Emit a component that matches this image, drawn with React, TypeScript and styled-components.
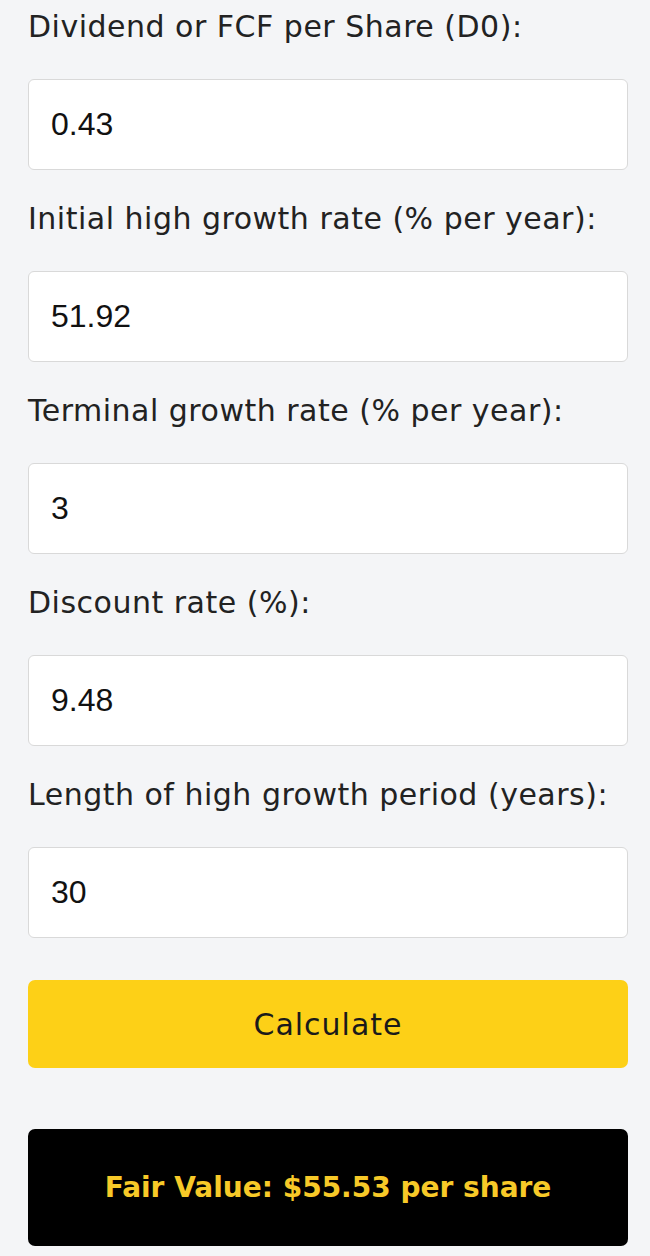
import { useState } from "react";
import styled, { createGlobalStyle } from "styled-components";

const GlobalStyle = createGlobalStyle`
    html, body {
        margin: 0;
        padding: 0;
        background: #f4f5f7;
    }
    * {
        box-sizing: border-box;
    }
`;

type Field = {
    name: string;
    label: string;
    value: string;
};

const initialFields: Field[] = [
    { name: "d0", label: "Dividend or FCF per Share (D0):", value: "0.43" },
    { name: "highGrowth", label: "Initial high growth rate (% per year):", value: "51.92" },
    { name: "terminal", label: "Terminal growth rate (% per year):", value: "3" },
    { name: "discount", label: "Discount rate (%):", value: "9.48" },
    { name: "years", label: "Length of high growth period (years):", value: "30" },
];

function App() {
    const [fields, setFields] = useState<Field[]>(initialFields);

    const onChangeHandler = (event: React.ChangeEvent<HTMLInputElement>) => {
        const { name, value } = event.target;
        setFields((prev) => prev.map((f) => (f.name === name ? { ...f, value } : f)));
    };

    return (
        <>
            <GlobalStyle />
            <Container>
                {fields.map((field) => (
                    <FieldGroup key={field.name}>
                        <Label htmlFor={field.name}>{field.label}</Label>
                        <Input
                            id={field.name}
                            name={field.name}
                            value={field.value}
                            onChange={onChangeHandler}
                        />
                    </FieldGroup>
                ))}
                <CalcButton type="button">Calculate</CalcButton>
                <Result>Fair Value: $55.53 per share</Result>
            </Container>
        </>
    );
}

export default App;

const Container = styled.div`
    display: flex;
    flex-direction: column;
    padding: 7px 22px 0 28px;
    font-family: "DejaVu Sans", "Liberation Sans", sans-serif;
`;

const FieldGroup = styled.div`
    display: flex;
    flex-direction: column;
    row-gap: 32px;
    margin-bottom: 29px;
`;

const Label = styled.label`
    font-size: 30px;
    font-weight: 400;
    line-height: 40px;
    letter-spacing: 0.5px;
    color: #222;
`;

const Input = styled.input`
    height: 91px;
    padding: 0 22px;
    border: 1px solid #d9d9d9;
    border-radius: 6px;
    background: #ffffff;
    font-family: "Liberation Sans", Arial, sans-serif;
    font-size: 32px;
    color: #111;
    outline: none;
`;

const CalcButton = styled.button`
    height: 88px;
    margin-top: 13px;
    border: none;
    border-radius: 7px;
    background: #fdd017;
    font-family: "DejaVu Sans", "Liberation Sans", sans-serif;
    font-size: 30px;
    letter-spacing: 1px;
    color: #1a1a1a;
    cursor: pointer;
`;

const Result = styled.div`
    display: flex;
    align-items: center;
    justify-content: center;
    height: 117px;
    margin-top: 61px;
    border-radius: 7px;
    background: #000;
    color: #f7c928;
    font-size: 28px;
    font-weight: 700;
`;
